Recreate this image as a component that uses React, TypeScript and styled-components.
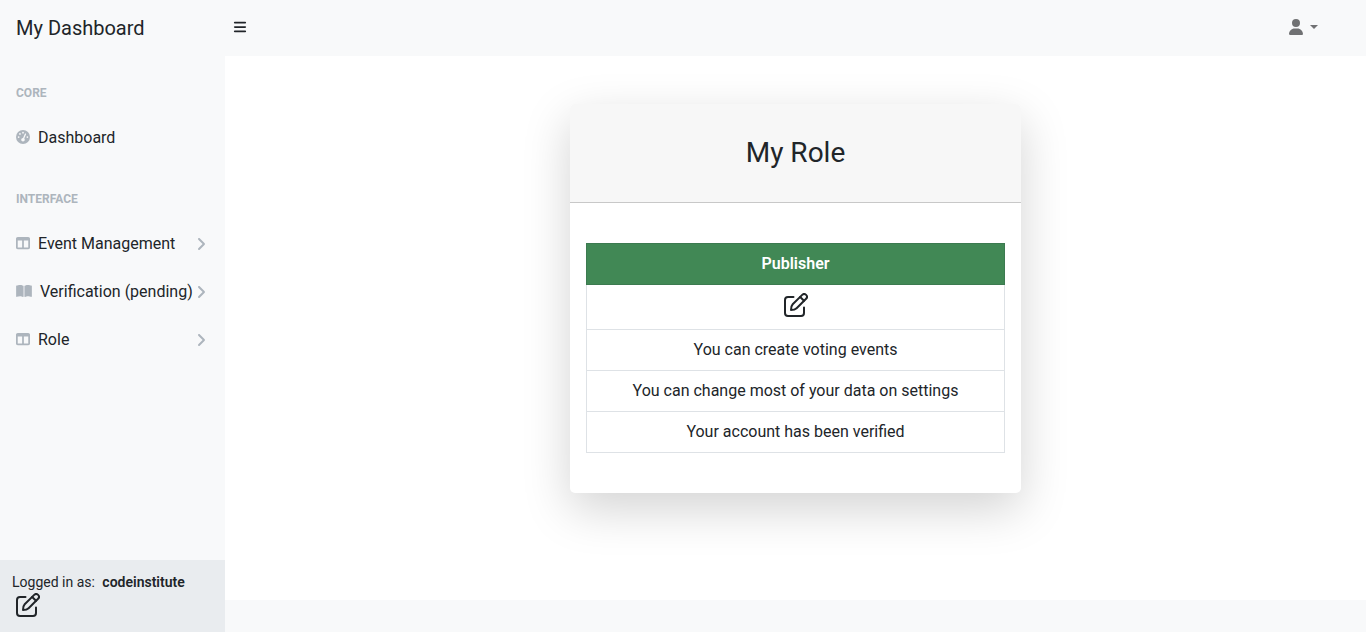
import React from "react";
import styled, { createGlobalStyle } from "styled-components";
import { FaBars, FaGaugeHigh, FaTableColumns, FaBookOpen, FaAngleRight, FaUser } from "react-icons/fa6";

const GlobalStyle = createGlobalStyle`
  *, *::before, *::after { box-sizing: border-box; }
  body {
    margin: 0;
    font-family: Roboto, "Liberation Sans", sans-serif;
    font-size: 16px;
    font-weight: 400;
    line-height: 24px;
    color: #212529;
    background: #fff;
  }
  button { font: inherit; color: inherit; border: 0; background: none; padding: 0; cursor: pointer; }
  a { color: inherit; text-decoration: none; }
  svg { display: block; flex: none; }
`;

const Page = styled.div`
  min-height: 100vh;
  display: flex;
  flex-direction: column;
`;

const TopBar = styled.header`
  display: flex;
  align-items: center;
  height: 56px;
  padding-right: 48px;
  background: #f8f9fa;
`;

const Brand = styled.a`
  width: 225px;
  padding-left: 16px;
  font-size: 20px;
  line-height: 30px;
`;

const MenuToggle = styled.button`
  padding: 4px 8px 6px;
  font-size: 14px;
`;

const UserMenu = styled.button`
  display: flex;
  align-items: center;
  gap: 6px;
  margin-left: auto;
  padding-bottom: 2px;
  color: #707173;
`;

const Caret = styled.span`
  border-top: 4px solid currentColor;
  border-left: 4px solid transparent;
  border-right: 4px solid transparent;
`;

const Body = styled.div`
  flex: 1;
  display: flex;
`;

const Sidebar = styled.aside`
  flex: none;
  width: 225px;
  display: flex;
  flex-direction: column;
  background: #f8f9fa;
`;

const Nav = styled.nav`
  flex: 1;
`;

const Heading = styled.h2`
  margin: 0;
  padding: 28px 16px 12px;
  font-size: 12px;
  line-height: 18px;
  font-weight: 700;
  text-transform: uppercase;
  color: #adb5bd;
`;

const NavItem = styled.a`
  display: flex;
  align-items: center;
  padding: 12px 19px 12px 16px;
  white-space: nowrap;
`;

const NavIcon = styled.span<{ $wide?: boolean }>`
  margin-right: 8px;
  padding-bottom: 2px;
  color: #adb5bd;
  font-size: 14px;

  svg { width: ${(p) => (p.$wide ? 16 : 14)}px; }
`;

const NavArrow = styled.span`
  margin-left: auto;
  color: #adb5bd;

  svg { width: 10px; }
`;

const SideFooter = styled.div`
  padding: 12px;
  background: #e9ecef;
`;

const Login = styled.p`
  margin: 0;
  font-size: 14px;
  line-height: 21px;
`;

const UserName = styled.strong`
  margin-left: 4px;
  font-weight: 600;
`;

const FooterIcon = styled.div`
  padding: 0 4px 3px;
`;

const Content = styled.div`
  flex: 1;
  display: flex;
  flex-direction: column;
`;

const Main = styled.main`
  flex: 1;
  display: flex;
  justify-content: center;
  align-items: flex-start;
  padding: 48px 12px;
`;

const Card = styled.section`
  width: 451px;
  max-width: 100%;
  border-radius: 5px;
  background: #fff;
  box-shadow: 0 16px 48px rgba(0, 0, 0, 0.175);
`;

const CardHeader = styled.header`
  padding: 32px 16px;
  border-bottom: 1px solid #c8c8c8;
  border-radius: 5px 5px 0 0;
  background: #f7f7f7;
  text-align: center;
`;

const CardTitle = styled.h1`
  margin: 0;
  font-size: 28px;
  line-height: 34px;
  font-weight: 400;
`;

const CardBody = styled.div`
  padding: 40px 16px;
`;

const RoleTable = styled.table`
  width: 100%;
  border-collapse: collapse;
  text-align: center;
`;

const RoleName = styled.th`
  padding: 8px;
  border: 1px solid #3c7a50;
  background: #418855;
  color: #fff;
  font-weight: 600;
`;

const RoleCell = styled.td`
  padding: 8px;
  border: 1px solid #dee2e6;

  svg { margin: 0 auto 4px; }
`;

const PageFooter = styled.footer`
  height: 32px;
  background: #f8f9fa;
`;

const EditIcon = () => (
  <svg width="24" height="24" viewBox="0 0 24 24" fill="none" stroke="currentColor" strokeWidth="2" strokeLinecap="round" strokeLinejoin="round" aria-hidden="true">
    <path d="M9.500 4H4A3 3 0 0 0 1 7V20A3 3 0 0 0 4 23H17A3 3 0 0 0 20 20V14.500" />
    <path d="M7 17C7 14.500 7.300 12.700 8.700 11.300L18.200 1.900A2.750 2.750 0 0 1 22.100 5.800L12.600 15.200C11.200 16.600 9.500 17 7 17Z" />
    <path d="M16.200 4L20 7.800" />
  </svg>
);

const interfaceLinks = [
  { label: "Event Management", icon: <FaTableColumns />, wide: false },
  { label: "Verification (pending)", icon: <FaBookOpen />, wide: true },
  { label: "Role", icon: <FaTableColumns />, wide: false },
];

const permissions = [
  "You can create voting events",
  "You can change most of your data on settings",
  "Your account has been verified",
];

export default function App() {
  return (
    <Page>
      <GlobalStyle />
      <TopBar>
        <Brand href="#">My Dashboard</Brand>
        <MenuToggle aria-label="Toggle sidebar"><FaBars /></MenuToggle>
        <UserMenu aria-label="User menu"><FaUser /><Caret /></UserMenu>
      </TopBar>
      <Body>
        <Sidebar>
          <Nav>
            <Heading>Core</Heading>
            <NavItem href="#"><NavIcon><FaGaugeHigh /></NavIcon>Dashboard</NavItem>
            <Heading>Interface</Heading>
            {interfaceLinks.map((link) => (
              <NavItem href="#" key={link.label}>
                <NavIcon $wide={link.wide}>{link.icon}</NavIcon>
                {link.label}
                <NavArrow><FaAngleRight /></NavArrow>
              </NavItem>
            ))}
          </Nav>
          <SideFooter>
            <Login>Logged in as: <UserName>codeinstitute</UserName></Login>
            <FooterIcon><EditIcon /></FooterIcon>
          </SideFooter>
        </Sidebar>
        <Content>
          <Main>
            <Card>
              <CardHeader><CardTitle>My Role</CardTitle></CardHeader>
              <CardBody>
                <RoleTable>
                  <thead><tr><RoleName scope="col">Publisher</RoleName></tr></thead>
                  <tbody>
                    <tr><RoleCell><EditIcon /></RoleCell></tr>
                    {permissions.map((text) => (
                      <tr key={text}><RoleCell>{text}</RoleCell></tr>
                    ))}
                  </tbody>
                </RoleTable>
              </CardBody>
            </Card>
          </Main>
          <PageFooter />
        </Content>
      </Body>
    </Page>
  );
}
